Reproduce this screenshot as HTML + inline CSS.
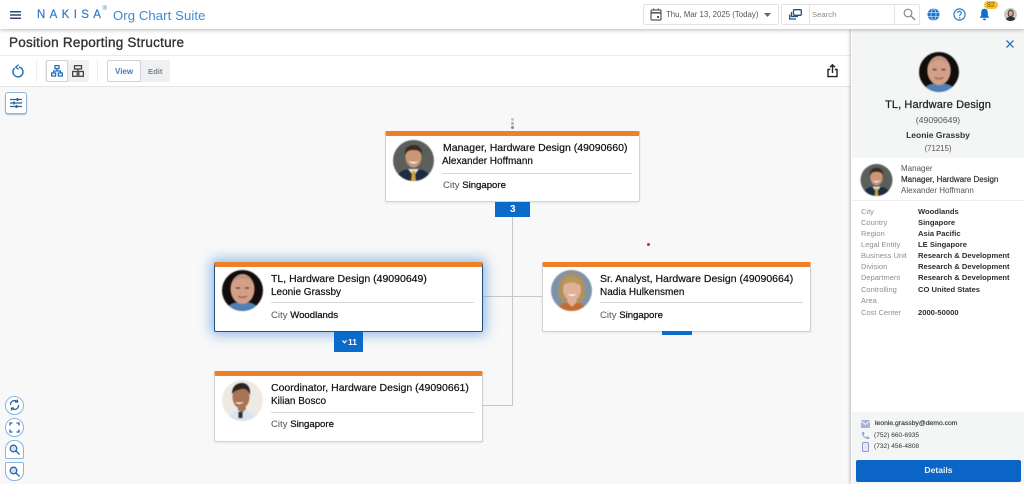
<!DOCTYPE html>
<html><head><meta charset="utf-8">
<style>
html,body{margin:0;padding:0;width:1024px;height:484px;overflow:hidden;background:#f8f8f8;font-family:"Liberation Sans",Arial,sans-serif;color:#222}
div,span,svg{position:absolute;box-sizing:border-box}
.t{white-space:nowrap;line-height:1}
.card{background:#fff;border:1px solid #cfd2d8;border-top:5px solid #ee8128;border-radius:2px;box-shadow:0 1px 2px rgba(0,0,0,.08)}
.ti{font-size:10.5px;color:#111;-webkit-text-stroke:.2px #111}
.nm{font-size:10px;color:#111;-webkit-text-stroke:.2px #111}
.ct{font-size:9.6px;color:#555}
.ct b{font-weight:400;color:#111;-webkit-text-stroke:.25px #111}
.hr{height:1px;background:#d8d8d8}
.lb{font-size:7.5px;color:#8c8f94;left:861px}
.vl{font-size:7.6px;color:#2b2d33;left:918px;font-weight:700}
.rb{width:19px;height:19px;border:1.5px solid #8db3de;background:#fff;left:5px}
.av{filter:blur(.4px)}
</style></head><body>

<!-- canvas connectors -->
<div style="left:512px;top:217px;width:1px;height:188px;background:#c5c7cc"></div>
<div style="left:483px;top:296px;width:59px;height:1px;background:#c5c7cc"></div>
<div style="left:483px;top:405px;width:30px;height:1px;background:#c5c7cc"></div>
<div style="left:511px;top:118px;width:3px;height:3px;border-radius:50%;background:#c4c4c4"></div>
<div style="left:511px;top:122px;width:3px;height:3px;border-radius:50%;background:#b0b0b0"></div>
<div style="left:511px;top:126px;width:3px;height:3px;border-radius:50%;background:#888"></div>
<div style="left:647px;top:243px;width:3px;height:3px;border-radius:50%;background:#e0242a"></div>

<!-- header -->
<div style="left:0;top:0;width:1024px;height:29px;background:#fff;box-shadow:0 1px 4px rgba(0,0,0,.28);z-index:5">
<svg style="left:10px;top:11px" width="11" height="8"><path d="M0 .75H11M0 4H11M0 7.25H11" stroke="#2f4a68" stroke-width="1.4"/></svg>
<span class="t" style="left:37px;top:9.5px;font-size:11.5px;color:#2a7cc7;letter-spacing:4.35px;-webkit-text-stroke:.2px #2a7cc7">NAKISA</span>
<span class="t" style="left:102.5px;top:6px;font-size:6px;color:#2a7cc7">®</span>
<span class="t" style="left:113px;top:8.5px;font-size:13.1px;color:#3b8ad6;letter-spacing:.1px">Org Chart Suite</span>

<div style="left:643px;top:4px;width:136px;height:21px;border:1px solid #e3e3e3;border-radius:2px"></div>
<svg style="left:650px;top:8px" width="12" height="13" viewBox="0 0 12 13"><rect x="1" y="2" width="10" height="10" rx="1" fill="none" stroke="#555" stroke-width="1.2"/><path d="M1 4.8H11" stroke="#555" stroke-width="1.6"/><path d="M3.5 .5V2.5M8.5 .5V2.5" stroke="#555" stroke-width="1.2"/><rect x="7" y="8" width="2" height="2" fill="#555"/></svg>
<span class="t" style="left:666px;top:10.5px;font-size:7.85px;color:#555">Thu, Mar 13, 2025 (Today)</span>
<svg style="left:764px;top:13px" width="7" height="4"><path d="M0 0H7L3.5 4Z" fill="#666"/></svg>

<div style="left:781px;top:4px;width:139px;height:21px;border:1px solid #e3e3e3;border-radius:2px"></div>
<div style="left:809px;top:4px;width:1px;height:21px;background:#e3e3e3"></div>
<div style="left:894px;top:4px;width:1px;height:21px;background:#e3e3e3"></div>
<svg style="left:789px;top:9px" width="13" height="11" viewBox="0 0 13 11"><rect x="4.5" y=".7" width="7.8" height="5.6" rx="1" fill="none" stroke="#20507f" stroke-width="1.3"/><path d="M2.5 3V7.5H9M.7 5.5V10H7" fill="none" stroke="#20507f" stroke-width="1.3"/></svg>
<span class="t" style="left:812px;top:10.5px;font-size:7.7px;color:#8d8d8d">Search</span>
<svg style="left:903px;top:8px" width="13" height="13" viewBox="0 0 13 13"><circle cx="5" cy="5" r="3.8" fill="none" stroke="#888" stroke-width="1.2"/><path d="M8 8L12 12" stroke="#888" stroke-width="1.5"/></svg>

<svg style="left:927px;top:8px" width="13" height="13" viewBox="0 0 13 13"><circle cx="6.5" cy="6.5" r="6" fill="#1f76cc"/><ellipse cx="6.5" cy="6.5" rx="2.5" ry="5.6" fill="none" stroke="#bcd8f3" stroke-width=".8"/><path d="M1 4.6H12M1 8.4H12" stroke="#bcd8f3" stroke-width=".8"/></svg>
<svg style="left:953px;top:8px" width="13" height="13" viewBox="0 0 13 13"><circle cx="6.5" cy="6.5" r="5.6" fill="none" stroke="#2a80d2" stroke-width="1.2"/><path d="M4.7 5C4.8 3.8 5.5 3.3 6.5 3.3C7.6 3.3 8.4 4 8.4 5C8.4 6.3 6.6 6.3 6.6 7.9" fill="none" stroke="#2a80d2" stroke-width="1.2"/><circle cx="6.6" cy="9.7" r=".8" fill="#2a80d2"/></svg>
<svg style="left:979px;top:8px" width="11" height="13" viewBox="0 0 11 13"><path d="M5.5 .8C3.2 .8 2.2 2.6 2.2 4.8V7.5L.7 9.8H10.3L8.8 7.5V4.8C8.8 2.6 7.8 .8 5.5 .8Z" fill="#0b6fd0"/><rect x="4" y="10.5" width="3" height="1.8" rx=".9" fill="#0b6fd0"/></svg>
<div style="left:984px;top:1px;width:14px;height:8px;border-radius:4px;background:#f7c325"></div>
<span class="t" style="left:987px;top:1.5px;font-size:7px;color:#6b5510">82</span>
<svg style="left:1004px;top:8px" width="13" height="13" viewBox="0 0 13 13"><defs><clipPath id="u"><circle cx="6.5" cy="6.5" r="6.5"/></clipPath></defs><g clip-path="url(#u)"><rect width="13" height="13" fill="#c9c9c6"/><ellipse cx="6.7" cy="5.5" rx="3" ry="4" fill="#4f3a30"/><ellipse cx="6.7" cy="5.3" rx="2" ry="2.7" fill="#d6aa92"/><path d="M1.5 13C2 9.5 4.5 8.8 6.7 8.8S11.5 9.5 12 13Z" fill="#2f2f35"/></g></svg>
</div>

<!-- title + toolbar -->
<div style="left:0;top:29px;width:851px;height:58px;background:#fff;border-bottom:1px solid #e4e4e4"></div>
<div style="left:0;top:55px;width:851px;height:1px;background:#eaeaea"></div>
<span class="t" style="left:9px;top:36px;font-size:13.5px;-webkit-text-stroke:.35px #333;color:#333;letter-spacing:.23px">Position Reporting Structure</span>

<svg style="left:11px;top:64px" width="13" height="14" viewBox="0 0 13 14"><path d="M3.6 4.2A5 5 0 1 0 8 3" fill="none" stroke="#2a72c0" stroke-width="1.5"/><path d="M7.6 .6L4.6 3.2L7.8 5.4" fill="none" stroke="#2a72c0" stroke-width="1.3"/></svg>
<div style="left:36px;top:60px;width:1px;height:22px;background:#ededed"></div>
<div style="left:45px;top:60px;width:44px;height:22px;background:#eff0f2;border-radius:2px"></div>
<div style="left:46px;top:60px;width:22px;height:22px;background:#fff;border:1px solid #cfd2d8;border-radius:2px"></div>
<svg style="left:51px;top:65px" width="12" height="12" viewBox="0 0 12 12" fill="none" stroke="#1f6fc4" stroke-width="1.3"><rect x="4" y=".6" width="4" height="3"/><rect x=".6" y="8" width="4" height="3"/><rect x="7.4" y="8" width="4" height="3"/><path d="M6 3.6V6M2.6 8V6H9.4V8"/></svg>
<svg style="left:72px;top:65px" width="12" height="12" viewBox="0 0 12 12" fill="none" stroke="#444" stroke-width="1.3"><rect x="2.5" y=".6" width="7" height="3.4"/><rect x=".6" y="6.5" width="4.6" height="4.8"/><rect x="6.8" y="6.5" width="4.6" height="4.8"/><path d="M6 4V6.5"/></svg>
<div style="left:97px;top:60px;width:1px;height:22px;background:#ededed"></div>
<div style="left:107px;top:60px;width:63px;height:22px;background:#eff0f2;border-radius:2px"></div>
<div style="left:107px;top:60px;width:34px;height:22px;background:#fff;border:1px solid #cfd2d8;border-radius:2px"></div>
<span class="t" style="left:115px;top:67.5px;font-size:8px;font-weight:700;color:#3f7fc0">View</span>
<span class="t" style="left:148px;top:67.5px;font-size:7.6px;font-weight:700;color:#7d8085">Edit</span>
<svg style="left:827px;top:64px" width="11" height="14" viewBox="0 0 11 14" fill="none" stroke="#222" stroke-width="1.4"><path d="M3.2 5.5H1V12.6H10V5.5H7.8"/><path d="M5.5 9V1M3 3.2L5.5 .8L8 3.2"/></svg>

<div style="left:5px;top:92px;width:22px;height:22px;background:#fff;border:1.5px solid #8db3de;border-radius:3px;box-shadow:0 1px 1px rgba(60,110,170,.4)"></div>
<svg style="left:10px;top:98px" width="12" height="10" viewBox="0 0 12 10" stroke="#2f5f92" stroke-width="1.2"><path d="M0 1.5H12M0 5H12M0 8.5H12"/><path d="M7.5 0V3M4 3.5V6.5M6.5 7V10" stroke-width="1.6"/></svg>

<!-- Manager card -->
<div class="card" style="left:385px;top:131px;width:255px;height:71px"></div>
<svg class="av" style="left:393px;top:140px" width="41" height="41" viewBox="0 0 41 41"><defs><clipPath id="a1"><circle cx="20.5" cy="20.5" r="20.5"/></clipPath></defs><g clip-path="url(#a1)"><rect width="41" height="41" fill="#5a5f5c"/><path d="M3 41C4 31 11 29 20.5 29S37 31 38 41Z" fill="#1c2b40"/><path d="M15 29L20.5 36L26 29Z" fill="#e8e6e0"/><path d="M19 31H22L23 41H18Z" fill="#c9a43a"/><ellipse cx="20.5" cy="17" rx="8" ry="10.5" fill="#c99777"/><path d="M12 15C11 7 17 5 21 5S30 8 29 15C27 10 24 10 20 10S14 11 12 15Z" fill="#3c2a1e"/><path d="M15.5 21Q20.5 26 25.5 21Q20.5 23 15.5 21Z" fill="#fff"/></g></svg>
<span class="t ti" style="left:443px;top:143px">Manager, Hardware Design (49090660)</span>
<span class="t nm" style="left:442px;top:157px">Alexander Hoffmann</span>
<div class="hr" style="left:442px;top:173px;width:190px"></div>
<span class="t ct" style="left:443px;top:180.5px">City <b>Singapore</b></span>
<div style="left:495px;top:202px;width:35px;height:15px;background:#0b6bcb"></div>
<span class="t" style="left:510px;top:204.5px;font-size:10px;font-weight:700;color:#fff">3</span>

<!-- Selected card -->
<div class="card" style="left:214px;top:262px;width:269px;height:70px;border:1.5px solid #23517f;border-top:5px solid #ee8128;box-shadow:0 0 12px 3px rgba(60,135,220,.55)"></div>
<svg class="av" style="left:222px;top:270px" width="41" height="41" viewBox="0 0 41 41"><defs><clipPath id="a2"><circle cx="20.5" cy="20.5" r="20.5"/></clipPath></defs><g clip-path="url(#a2)"><rect width="41" height="41" fill="#120d0b"/><path d="M4 41C6 33 13 32 20.5 32S35 33 37 41Z" fill="#4f7fb5"/><ellipse cx="20.5" cy="19" rx="12" ry="15" fill="#d39f86"/><path d="M11 13C12 7 16 5 20.5 5S29 7 30 13C27 9 24 8.500 20.5 8.500S14 9 11 13Z" fill="#c09480"/><path d="M14 18H18M23 18H27" stroke="#5a3a2c" stroke-width="1.3"/><path d="M16 26Q20.500 29 25 26" stroke="#8d5c4c" stroke-width="1.2" fill="none"/></g></svg>
<span class="t ti" style="left:271px;top:274px">TL, Hardware Design (49090649)</span>
<span class="t nm" style="left:271px;top:287.5px">Leonie Grassby</span>
<div class="hr" style="left:271px;top:302px;width:203px"></div>
<span class="t ct" style="left:271px;top:310.5px">City <b>Woodlands</b></span>
<div style="left:334px;top:332px;width:29px;height:20px;background:#0b6bcb"></div>
<svg style="left:342px;top:340px" width="5" height="4"><path d="M.5 .5L2.5 2.8L4.500 .5" fill="none" stroke="#fff" stroke-width="1.2"/></svg>
<span class="t" style="left:348px;top:337.5px;font-size:8.5px;font-weight:700;color:#fff">11</span>

<!-- Right card -->
<div class="card" style="left:542px;top:262px;width:269px;height:70px"></div>
<svg class="av" style="left:551px;top:270px" width="41" height="41" viewBox="0 0 41 41"><defs><clipPath id="a3"><circle cx="20.5" cy="20.5" r="20.5"/></clipPath></defs><g clip-path="url(#a3)"><rect width="41" height="41" fill="#7f93a8"/><path d="M8 28C5 12 12 3 21 3S37 12 33 30L28 33H13Z" fill="#b0905f"/><path d="M6 41C9 34 14 32 20.5 32S33 34 36 41Z" fill="#c66a32"/><ellipse cx="21" cy="19" rx="9" ry="12" fill="#dfb196"/><path d="M16 32L21 37L26 32L25 27H17Z" fill="#dfb196"/><path d="M12 15C13 7 19 6 23 7S30 11 30 16C26 13 20 10 12 15Z" fill="#b8975f"/><path d="M16.5 24Q21 28 25.5 24Q21 25 16.5 24Z" fill="#fff"/></g></svg>
<span class="t ti" style="left:600px;top:274px">Sr. Analyst, Hardware Design (49090664)</span>
<span class="t nm" style="left:600px;top:287.5px">Nadia Hulkensmen</span>
<div class="hr" style="left:600px;top:302px;width:203px"></div>
<span class="t ct" style="left:600px;top:310.5px">City <b>Singapore</b></span>
<div style="left:662px;top:331px;width:30px;height:4px;background:#0b6bcb"></div>

<!-- Coordinator card -->
<div class="card" style="left:214px;top:371px;width:269px;height:71px"></div>
<svg class="av" style="left:222px;top:380px" width="41" height="41" viewBox="0 0 41 41"><defs><clipPath id="a4"><circle cx="20.5" cy="20.5" r="20.5"/></clipPath></defs><g clip-path="url(#a4)"><rect width="41" height="41" fill="#efe9e4"/><path d="M6 41C8 32 14 30 20 30S34 33 36 41Z" fill="#d9e4ee"/><ellipse cx="19" cy="17" rx="8.5" ry="11.5" fill="#a87456"/><path d="M10 14C10 5 16 3 20 3S29 6 28 15C26 9 22 8 19 9S13 10 10 14Z" fill="#2b2320"/><path d="M16 30L20 33L24 29L23 24H16Z" fill="#a87456"/><path d="M13 22Q17 26 22 22Q17 23 13 22Z" fill="#fff"/><rect x="16.5" y="32" width="4" height="6" fill="#222c40"/></g></svg>
<span class="t ti" style="left:271px;top:382.5px">Coordinator, Hardware Design (49090661)</span>
<span class="t nm" style="left:271px;top:397px">Kilian Bosco</span>
<div class="hr" style="left:271px;top:412px;width:203px"></div>
<span class="t ct" style="left:271px;top:420px">City <b>Singapore</b></span>

<!-- Zoom rail -->
<div class="rb" style="top:396px;border-radius:50%"></div>
<svg style="left:9px;top:399px" width="11" height="12" viewBox="0 0 11 12" fill="none" stroke="#2a64a8" stroke-width="1.3"><path d="M1.5 6A4 4 0 0 1 8 2.5M9.5 6A4 4 0 0 1 3 9.5"/><path d="M8.5 .5V3H6M2.5 11.5V9H5"/></svg>
<div class="rb" style="top:418px;border-radius:50%"></div>
<svg style="left:9px;top:422px" width="11" height="11" viewBox="0 0 11 11" fill="none" stroke="#2a64a8" stroke-width="1.3"><path d="M1 3.5V1H3.5M7.5 1H10V3.5M10 7.5V10H7.5M3.5 10H1V7.5"/></svg>
<div class="rb" style="top:440px;border-radius:9px 9px 2px 2px"></div>
<svg style="left:9px;top:444px" width="11" height="11" viewBox="0 0 11 11" fill="none" stroke="#2a64a8" stroke-width="1.3"><circle cx="4.5" cy="4.5" r="3.3" fill="#cfe0f2"/><path d="M7 7L10.5 10.5"/></svg>
<div class="rb" style="top:462px;border-radius:2px 2px 9px 9px"></div>
<svg style="left:9px;top:466px" width="11" height="11" viewBox="0 0 11 11" fill="none" stroke="#2a64a8" stroke-width="1.3"><circle cx="4.5" cy="4.5" r="3.3" fill="#cfe0f2"/><path d="M7 7L10.5 10.5"/></svg>

<!-- Side panel -->
<div style="left:851px;top:29px;width:173px;height:455px;background:#fff;box-shadow:-1px 0 3px rgba(0,0,0,.25)"></div>
<div style="left:852px;top:29px;width:172px;height:129px;background:#f4f6f6"></div>
<div style="left:852px;top:412px;width:172px;height:72px;background:#f4f6f6"></div>
<svg style="left:1006px;top:40px" width="8" height="8"><path d="M.5 .5L7.5 7.5M7.5 .5L.5 7.5" stroke="#2a72c0" stroke-width="1.3"/></svg>
<svg class="av" style="left:919px;top:52px" width="40" height="40" viewBox="0 0 41 41"><defs><clipPath id="a5"><circle cx="20.5" cy="20.5" r="20.5"/></clipPath></defs><g clip-path="url(#a5)"><rect width="41" height="41" fill="#120d0b"/><path d="M4 41C6 33 13 32 20.5 32S35 33 37 41Z" fill="#4f7fb5"/><ellipse cx="20.5" cy="19" rx="12" ry="15" fill="#d39f86"/><path d="M11 13C12 7 16 5 20.5 5S29 7 30 13C27 9 24 8.5 20.5 8.5S14 9 11 13Z" fill="#c09480"/><path d="M14 18H18M23 18H27" stroke="#5a3a2c" stroke-width="1.3"/><path d="M16 26Q20.5 29 25 26" stroke="#8d5c4c" stroke-width="1.2" fill="none"/></g></svg>
<div class="t" style="left:852px;width:172px;text-align:center;top:100px;font-size:11px;color:#222;-webkit-text-stroke:.25px #222;letter-spacing:.1px">TL, Hardware Design</div>
<div class="t" style="left:852px;width:172px;text-align:center;top:115.5px;font-size:8.7px;color:#555">(49090649)</div>
<div class="t" style="left:852px;width:172px;text-align:center;top:130.5px;font-size:8.5px;font-weight:700;color:#333">Leonie Grassby</div>
<div class="t" style="left:852px;width:172px;text-align:center;top:144.5px;font-size:7.8px;color:#555">(71215)</div>

<svg class="av" style="left:860px;top:164px" width="33" height="32" viewBox="0 0 41 41"><defs><clipPath id="a6"><circle cx="20.5" cy="20.5" r="20.5"/></clipPath></defs><g clip-path="url(#a6)"><rect width="41" height="41" fill="#5a5f5c"/><path d="M3 41C4 31 11 29 20.5 29S37 31 38 41Z" fill="#1c2b40"/><path d="M15 29L20.5 36L26 29Z" fill="#e8e6e0"/><path d="M19 31H22L23 41H18Z" fill="#c9a43a"/><ellipse cx="20.5" cy="17" rx="8" ry="10.5" fill="#c99777"/><path d="M12 15C11 7 17 5 21 5S30 8 29 15C27 10 24 10 20 10S14 11 12 15Z" fill="#3c2a1e"/><path d="M15.5 21Q20.5 26 25.5 21Q20.5 23 15.5 21Z" fill="#fff"/></g></svg>
<span class="t" style="left:901px;top:165px;font-size:8px;color:#555">Manager</span>
<span class="t" style="left:901px;top:176px;font-size:8px;color:#333;-webkit-text-stroke:.2px #333">Manager, Hardware Design</span>
<span class="t" style="left:901px;top:187px;font-size:8px;color:#555">Alexander Hoffmann</span>
<div style="left:852px;top:200px;width:172px;height:1px;background:#eee"></div>

<span class="t lb" style="top:207.5px">City</span><span class="t vl" style="top:207.5px">Woodlands</span>
<span class="t lb" style="top:218.5px">Country</span><span class="t vl" style="top:218.5px">Singapore</span>
<span class="t lb" style="top:229.5px">Region</span><span class="t vl" style="top:229.5px">Asia Pacific</span>
<span class="t lb" style="top:241px">Legal Entity</span><span class="t vl" style="top:241px">LE Singapore</span>
<span class="t lb" style="top:252px">Business Unit</span><span class="t vl" style="top:252px">Research &amp; Development</span>
<span class="t lb" style="top:263px">Division</span><span class="t vl" style="top:263px">Research &amp; Development</span>
<span class="t lb" style="top:274px">Department</span><span class="t vl" style="top:274px">Research &amp; Development</span>
<span class="t lb" style="top:285.5px">Controlling</span><span class="t vl" style="top:285.5px">CO United States</span>
<span class="t lb" style="top:297px">Area</span>
<span class="t lb" style="top:308.5px">Cost Center</span><span class="t vl" style="top:308.5px">2000-50000</span>

<svg style="left:861px;top:420px" width="9" height="8"><rect width="9" height="8" fill="#aab0dc"/><path d="M0 1L4.5 4.5L9 1" fill="none" stroke="#fff" stroke-width=".8"/></svg>
<svg style="left:861px;top:431px" width="9" height="9" viewBox="0 0 9 9"><path d="M1 1C.5 5 4 8.5 8.5 8L8 6L6 5.5L5 6.5C4 6 3 5 2.5 3.8L3.5 3L3 1Z" fill="#9aa2d6"/></svg>
<svg style="left:862px;top:442px" width="7" height="10"><rect x=".5" y=".5" width="6" height="9" rx="1" fill="#e5e7f6" stroke="#8f97d2"/></svg>
<span class="t" style="left:875px;top:420.5px;font-size:6.8px;color:#333;-webkit-text-stroke:.15px #333">leonie.grassby@demo.com</span>
<span class="t" style="left:874px;top:432.5px;font-size:6.6px;color:#333">(752) 660-6935</span>
<span class="t" style="left:874px;top:443.5px;font-size:6.6px;color:#333">(732) 456-4808</span>
<div style="left:856px;top:460px;width:165px;height:22px;background:#0b65c6;border-radius:2px"></div>
<div class="t" style="left:856px;width:165px;top:466px;text-align:center;font-size:8.6px;font-weight:700;color:#e8f0fa">Details</div>

</body></html>
